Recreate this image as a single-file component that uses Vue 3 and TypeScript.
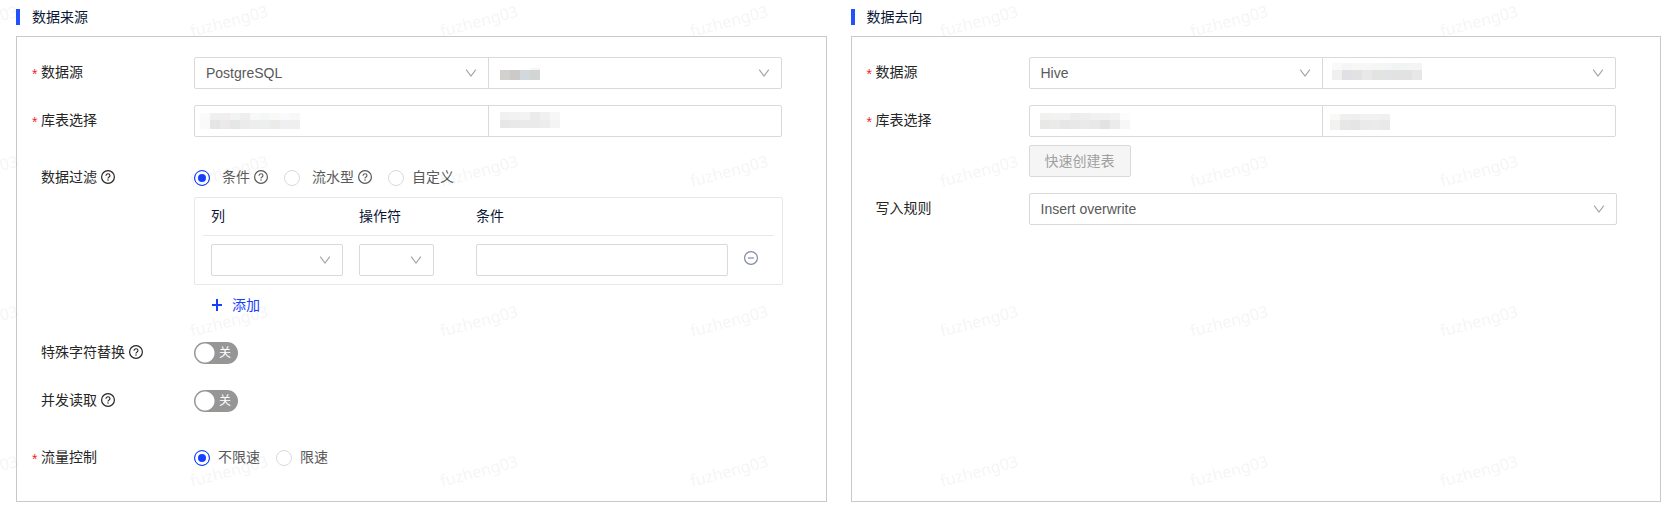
<script setup lang="ts">
import { ref } from 'vue'

interface Mask {
  x: number
  y: number
  heights: number[]
  rows: string[][]
}

const masks: Record<string, Mask> = {
  sourceName: {
    x: 12, y: 11, heights: [2, 10],
    rows: [
      ['#ffffff', '#ffffff', '#ffffff', '#f6f6f6'],
      ['#d3d1cd', '#cbcac8', '#d3d8dc', '#d3d5d2'],
    ],
  },
  sourceDb: {
    x: 6, y: 8, heights: [7, 9],
    rows: [
      ['#fafafa', '#efefef', '#f0efee', '#f3f3f3', '#eeeeee', '#f8f8f8', '#f6f6f6', '#f9f9f8', '#fafafa', '#f8f8f8'],
      ['#fafafa', '#e5e5e5', '#ebe9e9', '#e6e6e6', '#ebebeb', '#eceeee', '#edefee', '#ecebea', '#efeff1', '#efefef'],
    ],
  },
  sourceTable: {
    x: 12, y: 7, heights: [8, 8],
    rows: [
      ['#f1f1f1', '#f2f2f2', '#f3f3f3', '#ebebeb', '#f0f0f0', '#f7f7f7'],
      ['#e7e7e7', '#e9e9e8', '#eaeaea', '#e9eae9', '#ececeb', '#f4f4f4'],
    ],
  },
  targetName: {
    x: 10, y: 6, heights: [7, 10],
    rows: [
      ['#f9f9f9', '#f6f6f6', '#f7f7f7', '#f7f7f7', '#f6f6f6', '#f5f5f5', '#f2f3f3', '#f3f4f4', '#f3f4f4'],
      ['#f1f0ef', '#e0e1e4', '#e2e2e2', '#e8e8e8', '#e3e3e1', '#e1e3e5', '#e2e2e2', '#e2e2e2', '#e7e7e7'],
    ],
  },
  targetDb: {
    x: 11, y: 8, heights: [7, 9],
    rows: [
      ['#f1f1f1', '#f2f2f1', '#f2f2f2', '#ededec', '#eeeeee', '#f1f1f1', '#f1f1f1', '#f3f3f3', '#fcfcfd'],
      ['#e8e8e7', '#eaeae9', '#e6e6e6', '#e8e8e8', '#eaeaea', '#e8e8e8', '#e1e3e3', '#ebebeb', '#f7f7f9'],
    ],
  },
  targetTable: {
    x: 8, y: 9, heights: [6, 10],
    rows: [
      ['#f9f9f8', '#f0f0f0', '#efefef', '#f2f2f2', '#f2f2f1', '#f0f0f0'],
      ['#f3f2f1', '#e6e8e7', '#e5e5e5', '#eaeaea', '#ecebea', '#e8e9e9'],
    ],
  },
}

function cells(mask: Mask) {
  let y = 0
  return mask.rows.flatMap((row, r) => {
    const top = y
    y += mask.heights[r]
    return row.map((fill, c) => ({ x: c * 10, y: top, h: mask.heights[r], fill }))
  })
}

const sourceType = ref('PostgreSQL')
const targetType = ref('Hive')
const writeRule = ref('Insert overwrite')
const filterMode = ref('condition')
const flow = ref('unlimited')
const replaceChars = ref(false)
const parallelRead = ref(false)
const conditionValue = ref('')
</script>

<template>
  <main class="page">
    <svg class="defs" aria-hidden="true">
      <symbol id="down" viewBox="0 0 12 12"><path d="M1.2 2.6 6 9 10.8 2.6" fill="none" stroke="#a6a6a6" stroke-width="1.2" /></symbol>
      <symbol id="help" viewBox="0 0 14 14">
        <circle cx="7" cy="7" r="6.4" fill="none" stroke="currentColor" stroke-width="1.2" />
        <path d="M5 5.7C5 4.5 5.9 3.8 7 3.8s2 .7 2 1.8c0 .9-.6 1.3-1.2 1.6-.6.3-.8.5-.8 1.2v.2" fill="none" stroke="currentColor" stroke-width="1.1" />
        <circle cx="7" cy="10.1" r=".75" fill="currentColor" />
      </symbol>
    </svg>

    <section class="column">
      <h2 class="title">数据来源</h2>
      <div class="panel">
        <div class="row">
          <label class="label required" for="source-type">数据源</label>
          <div class="pair">
            <div class="field">
              <select id="source-type" v-model="sourceType"><option>PostgreSQL</option></select>
              <svg class="down"><use href="#down" /></svg>
            </div>
            <div class="field">
              <select aria-label="数据源名称"><option></option></select>
              <svg class="mask" :style="{ left: masks.sourceName.x + 'px', top: masks.sourceName.y + 'px' }">
                <rect v-for="(c, i) in cells(masks.sourceName)" :key="i" :x="c.x" :y="c.y" width="10" :height="c.h" :fill="c.fill" />
              </svg>
              <svg class="down"><use href="#down" /></svg>
            </div>
          </div>
        </div>

        <div class="row">
          <label class="label required" for="source-db">库表选择</label>
          <div class="pair">
            <div v-for="key in ['sourceDb', 'sourceTable']" :key="key" class="field">
              <input :id="key === 'sourceDb' ? 'source-db' : 'source-table'" type="text" :aria-label="key === 'sourceDb' ? '库' : '表'" />
              <svg class="mask" :style="{ left: masks[key].x + 'px', top: masks[key].y + 'px' }">
                <rect v-for="(c, i) in cells(masks[key])" :key="i" :x="c.x" :y="c.y" width="10" :height="c.h" :fill="c.fill" />
              </svg>
            </div>
          </div>
        </div>

        <div class="row spaced">
          <span id="filter-label" class="label">数据过滤<svg class="help"><use href="#help" /></svg></span>
          <div>
            <div class="radios" role="radiogroup" aria-labelledby="filter-label">
              <label class="radio wide"><input v-model="filterMode" type="radio" name="filter" value="condition" /><span>条件</span><svg class="help"><use href="#help" /></svg></label>
              <label class="radio wide"><input v-model="filterMode" type="radio" name="filter" value="stream" /><span>流水型</span><svg class="help"><use href="#help" /></svg></label>
              <label class="radio"><input v-model="filterMode" type="radio" name="filter" value="custom" /><span>自定义</span></label>
            </div>
            <div class="conditions">
              <table>
                <colgroup><col class="col-name" /><col class="col-op" /><col /><col class="col-act" /></colgroup>
                <thead>
                  <tr><th>列</th><th>操作符</th><th>条件</th><th></th></tr>
                </thead>
                <tbody>
                  <tr>
                    <td><div class="field"><select aria-label="列"><option></option></select><svg class="down"><use href="#down" /></svg></div></td>
                    <td><div class="field op"><select aria-label="操作符"><option></option></select><svg class="down"><use href="#down" /></svg></div></td>
                    <td><div class="field"><input v-model="conditionValue" type="text" aria-label="条件" /></div></td>
                    <td>
                      <button class="remove" type="button" aria-label="删除">
                        <svg viewBox="0 0 14 14"><circle cx="7" cy="7" r="6.4" /><path d="M4 7h6" /></svg>
                      </button>
                    </td>
                  </tr>
                </tbody>
              </table>
            </div>
            <button class="add" type="button">
              <svg viewBox="0 0 12 12"><path d="M1 6h10M6 0v12" /></svg>添加
            </button>
          </div>
        </div>

        <div class="row">
          <label class="label" for="replace">特殊字符替换<svg class="help"><use href="#help" /></svg></label>
          <label class="switch"><input id="replace" v-model="replaceChars" type="checkbox" role="switch" /><span>{{ replaceChars ? '开' : '关' }}</span></label>
        </div>

        <div class="row">
          <label class="label" for="parallel">并发读取<svg class="help"><use href="#help" /></svg></label>
          <label class="switch"><input id="parallel" v-model="parallelRead" type="checkbox" role="switch" /><span>{{ parallelRead ? '开' : '关' }}</span></label>
        </div>

        <div class="row spaced">
          <span id="flow-label" class="label required">流量控制</span>
          <div class="radios" role="radiogroup" aria-labelledby="flow-label">
            <label class="radio"><input v-model="flow" type="radio" name="flow" value="unlimited" /><span>不限速</span></label>
            <label class="radio"><input v-model="flow" type="radio" name="flow" value="limited" /><span>限速</span></label>
          </div>
        </div>
      </div>
    </section>

    <section class="column">
      <h2 class="title">数据去向</h2>
      <div class="panel">
        <div class="row">
          <label class="label required" for="target-type">数据源</label>
          <div class="pair">
            <div class="field">
              <select id="target-type" v-model="targetType"><option>Hive</option></select>
              <svg class="down"><use href="#down" /></svg>
            </div>
            <div class="field">
              <select aria-label="数据源名称"><option></option></select>
              <svg class="mask" :style="{ left: masks.targetName.x + 'px', top: masks.targetName.y + 'px' }">
                <rect v-for="(c, i) in cells(masks.targetName)" :key="i" :x="c.x" :y="c.y" width="10" :height="c.h" :fill="c.fill" />
              </svg>
              <svg class="down"><use href="#down" /></svg>
            </div>
          </div>
        </div>

        <div class="row">
          <label class="label required" for="target-db">库表选择</label>
          <div>
            <div class="pair">
              <div v-for="key in ['targetDb', 'targetTable']" :key="key" class="field">
                <input :id="key === 'targetDb' ? 'target-db' : 'target-table'" type="text" :aria-label="key === 'targetDb' ? '库' : '表'" />
                <svg class="mask" :style="{ left: masks[key].x + 'px', top: masks[key].y + 'px' }">
                  <rect v-for="(c, i) in cells(masks[key])" :key="i" :x="c.x" :y="c.y" width="10" :height="c.h" :fill="c.fill" />
                </svg>
              </div>
            </div>
            <button class="create" type="button" disabled>快速创建表</button>
          </div>
        </div>

        <div class="row">
          <label class="label" for="write-rule">写入规则</label>
          <div class="field">
            <select id="write-rule" v-model="writeRule"><option>Insert overwrite</option></select>
            <svg class="down"><use href="#down" /></svg>
          </div>
        </div>
      </div>
    </section>

    <svg class="watermark" aria-hidden="true">
      <defs>
        <pattern id="wm" width="250" height="150" patternUnits="userSpaceOnUse" x="-62" y="0">
          <text x="4" y="37" transform="rotate(-15 4 37)">fuzheng03</text>
        </pattern>
      </defs>
      <rect width="100%" height="100%" fill="url(#wm)" />
    </svg>
  </main>
</template>

<style>
body {
  margin: 0;
  background: #fff;
}
</style>

<style scoped>
.page {
  position: relative;
  display: grid;
  grid-template-columns: 1fr 1fr;
  gap: 24px;
  min-height: 100vh;
  box-sizing: border-box;
  padding: 0 10px 9px 16px;
  font: 14px/32px "Liberation Sans", "Noto Sans CJK SC", sans-serif;
  color: #262626;
}
.defs { position: absolute; width: 0; height: 0; }
.watermark {
  position: absolute;
  inset: 0;
  width: 100%;
  height: 100%;
  pointer-events: none;
}
.watermark text { font: 16px "Noto Sans", sans-serif; fill: #000; fill-opacity: .04; }

.column { display: flex; flex-direction: column; min-width: 0; }
.title {
  display: flex;
  align-items: center;
  gap: 12px;
  height: 34px;
  margin: 0 0 2px;
  font-size: 14px;
  font-weight: 400;
  color: #0a1736;
}
.title::before { content: ""; width: 4px; height: 16px; background: #2152ff; }
.panel {
  flex: 1;
  display: flex;
  flex-direction: column;
  gap: 16px;
  padding: 20px 43px 26px 15px;
  border: 1px solid #c9c9c9;
}
.row {
  display: grid;
  grid-template-columns: 162px minmax(0, 1fr);
  align-items: start;
  min-height: 32px;
}
.row.spaced { margin-top: 9px; }
.label { display: flex; align-items: center; padding-left: 9px; height: 30px; }
.label.required { padding-left: 0; }
.label.required::before {
  content: "*";
  width: 9px;
  padding-top: 4px;
  color: #f5222d;
  font-family: "Liberation Sans", sans-serif;
}
.help { width: 14px; height: 14px; margin-left: 4px; overflow: visible; }

.pair { display: grid; grid-template-columns: 1fr 1fr; padding-right: 1px; }
.pair .field:first-child { margin-right: -1px; }
.pair .field:first-child > :first-child { border-radius: 2px 0 0 2px; }
.pair .field:last-child > :first-child { border-radius: 0 2px 2px 0; }
.field { position: relative; height: 32px; }
.field select,
.field input {
  display: block;
  width: 100%;
  height: 32px;
  box-sizing: border-box;
  margin: 0;
  padding: 0 11px;
  border: 1px solid #d9d9d9;
  border-radius: 2px;
  background: #fff;
  color: #595959;
  font: inherit;
  line-height: 30px;
  appearance: none;
  outline: none;
}
.down { position: absolute; right: 12px; top: 10px; width: 12px; height: 12px; pointer-events: none; }
.mask { position: absolute; width: 100px; height: 20px; pointer-events: none; }

.radios { display: flex; gap: 16px; height: 32px; }
.radio { display: flex; align-items: center; gap: 8px; color: #595959; }
.radio.wide { gap: 4px; }
.radio.wide span { margin-left: 8px; }
.radio span { margin-bottom: 2px; }
.radio .help { margin: 0 0 2px; }
.radio input {
  appearance: none;
  width: 16px;
  height: 16px;
  margin: 0;
  border: 1px solid #d9d9d9;
  border-radius: 50%;
  background: #fff;
}
.radio input:checked {
  border-color: #1640ff;
  background: #1640ff;
  box-shadow: inset 0 0 0 3px #fff;
}

.conditions {
  margin-top: 3px;
  padding: 0 8px;
  border: 1px solid #e8e8e8;
  border-radius: 2px;
}
table { width: 100%; table-layout: fixed; border-collapse: separate; border-spacing: 0; }
.col-name { width: 148px; }
.col-op { width: 117px; }
.col-act { width: 38px; }
th {
  height: 35px;
  padding: 0 8px 2px;
  border-bottom: 1px solid #e8e8e8;
  text-align: left;
  font-weight: 400;
  color: #0a1736;
}
td { padding: 8px; vertical-align: top; }
.op { width: 75px; }
button { font: inherit; cursor: pointer; }
.remove { display: block; padding: 7px 0; border: 0; background: none; }
.remove svg { display: block; width: 14px; height: 14px; fill: none; stroke: #8489a6; stroke-width: 1.2; }
.add {
  display: flex;
  align-items: center;
  gap: 9px;
  height: 32px;
  margin: 4px 0 0 17px;
  padding: 0;
  border: 0;
  background: none;
  color: #1640ff;
}
.add svg { width: 12px; height: 12px; stroke: currentColor; stroke-width: 2; }

.switch { position: relative; display: block; width: 44px; height: 22px; margin-top: 5px; color: #fff; font-size: 12px; line-height: 22px; }
.switch input {
  display: block;
  appearance: none;
  width: 44px;
  height: 22px;
  margin: 0;
  border-radius: 11px;
  background: radial-gradient(circle at 11px 11px, #fff 9px, transparent 10px) #969696;
}
.switch input:checked { background: radial-gradient(circle at 33px 11px, #fff 9px, transparent 10px) #1640ff; }
.switch span { position: absolute; top: 0; right: 7px; }
.switch input:checked + span { right: auto; left: 7px; }

.create {
  display: block;
  height: 32px;
  margin-top: 8px;
  padding: 0 15px;
  border: 1px solid #d9d9d9;
  border-radius: 2px;
  background: #f5f5f5;
  color: #a0a0a0;
  line-height: 30px;
  cursor: not-allowed;
}
</style>
